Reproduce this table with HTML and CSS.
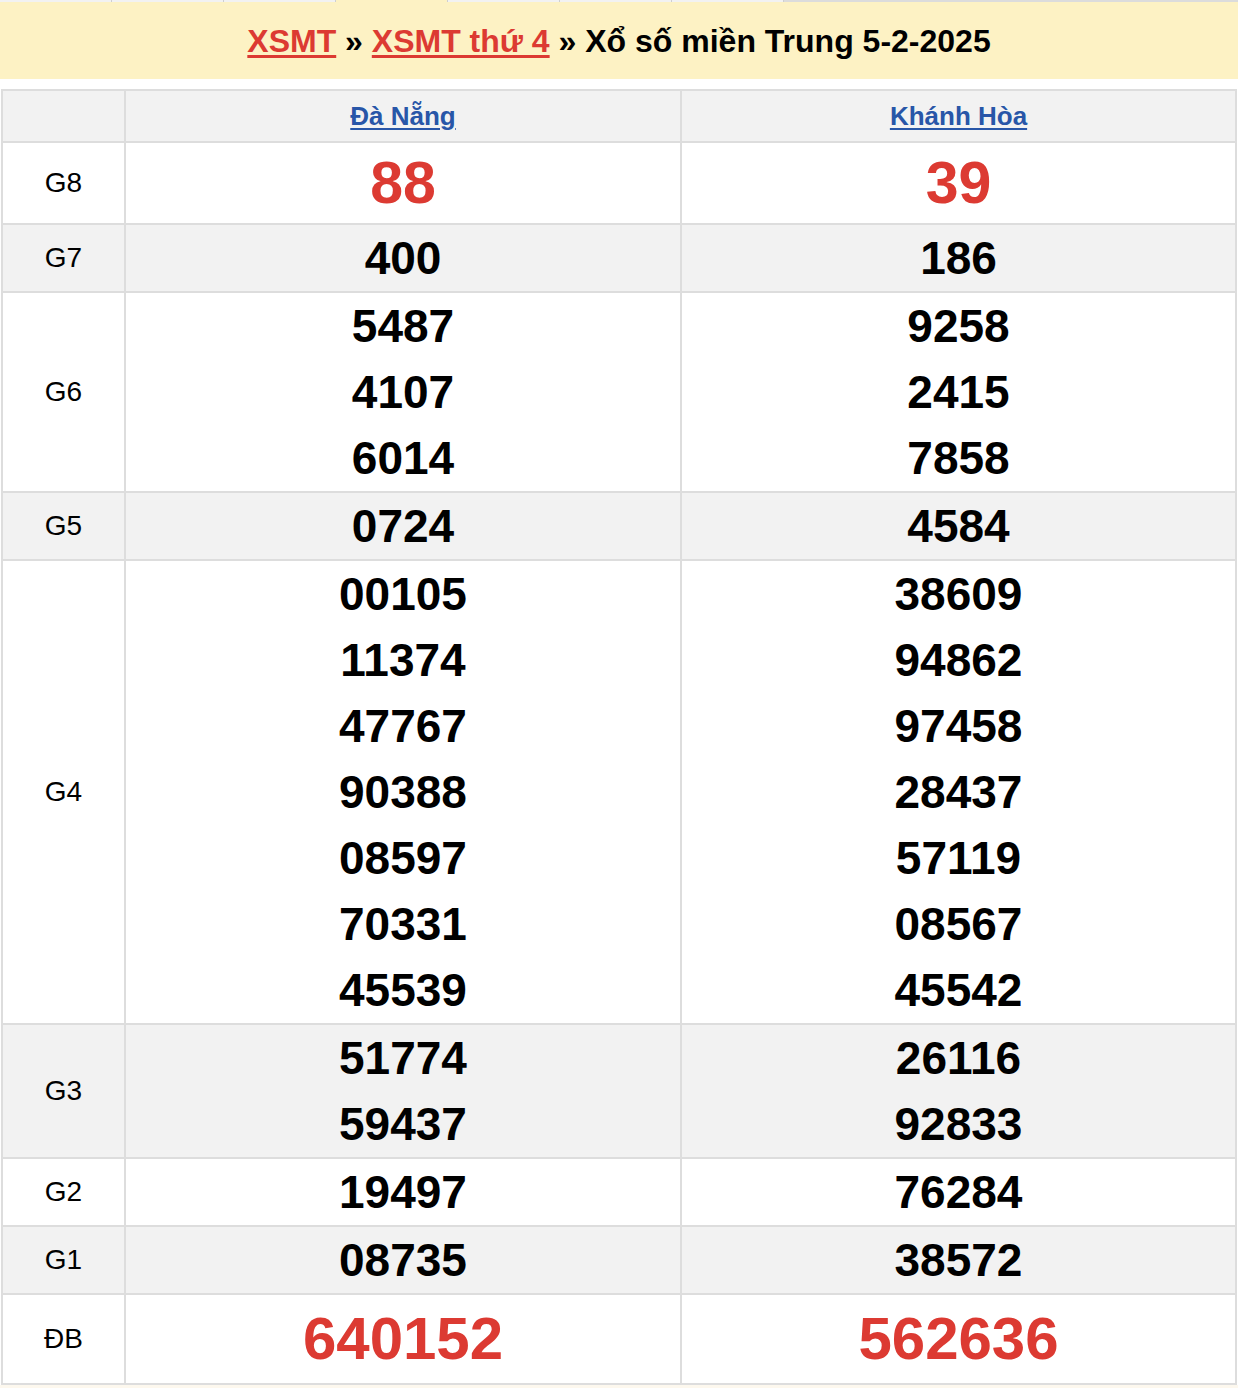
FILE: index.html
```html
<!DOCTYPE html>
<html lang="vi">
<head>
<meta charset="utf-8">
<title>Xổ số miền Trung 5-2-2025</title>
<link rel="stylesheet" href="styles.css">
</head>
<body>
<div class="tabs">
  <span class="tab"></span><span class="tab"></span><span class="tab"></span><span class="tab tab-active"></span><span class="tab"></span><span class="tab"></span><span class="tab"></span><span class="tab-rest"></span>
</div>
<div class="title-bar">
  <h1 class="title"><a href="#" class="crumb">XSMT</a> » <a href="#" class="crumb">XSMT thứ 4</a> » Xổ số miền Trung 5-2-2025</h1>
</div>
<table class="results">
  <colgroup><col class="c-label"><col class="c-prov"><col class="c-prov2"></colgroup>
  <thead>
    <tr class="alt head">
      <th></th>
      <th><a href="#" class="prov">Đà Nẵng</a></th>
      <th><a href="#" class="prov">Khánh Hòa</a></th>
    </tr>
  </thead>
  <tbody>
    <tr class="big-row">
      <td class="label">G8</td>
      <td><div class="num red big">88</div></td>
      <td><div class="num red big">39</div></td>
    </tr>
    <tr class="alt">
      <td class="label">G7</td>
      <td><div class="num">400</div></td>
      <td><div class="num">186</div></td>
    </tr>
    <tr>
      <td class="label">G6</td>
      <td><div class="num">5487</div><div class="num">4107</div><div class="num">6014</div></td>
      <td><div class="num">9258</div><div class="num">2415</div><div class="num">7858</div></td>
    </tr>
    <tr class="alt">
      <td class="label">G5</td>
      <td><div class="num">0724</div></td>
      <td><div class="num">4584</div></td>
    </tr>
    <tr>
      <td class="label">G4</td>
      <td><div class="num">00105</div><div class="num">11374</div><div class="num">47767</div><div class="num">90388</div><div class="num">08597</div><div class="num">70331</div><div class="num">45539</div></td>
      <td><div class="num">38609</div><div class="num">94862</div><div class="num">97458</div><div class="num">28437</div><div class="num">57119</div><div class="num">08567</div><div class="num">45542</div></td>
    </tr>
    <tr class="alt">
      <td class="label">G3</td>
      <td><div class="num">51774</div><div class="num">59437</div></td>
      <td><div class="num">26116</div><div class="num">92833</div></td>
    </tr>
    <tr>
      <td class="label">G2</td>
      <td><div class="num">19497</div></td>
      <td><div class="num">76284</div></td>
    </tr>
    <tr class="alt">
      <td class="label">G1</td>
      <td><div class="num">08735</div></td>
      <td><div class="num">38572</div></td>
    </tr>
    <tr>
      <td class="label">ĐB</td>
      <td><div class="num red db">640152</div></td>
      <td><div class="num red db">562636</div></td>
    </tr>
  </tbody>
</table>
<div class="foot"></div>
</body>
</html>
```

FILE: styles.css
```css
html, body {
  margin: 0;
  padding: 0;
  background: #ffffff;
  font-family: "Liberation Sans", Arial, Helvetica, sans-serif;
  color: #000;
}

.tabs {
  display: flex;
  height: 2px;
  background: #f2f2f2;
}
.tab {
  width: 111px;
  border-right: 1px solid #cfcfcf;
  background: #f2f2f2;
}
.tab-active {
  background: #fdf2c4;
}
.tab-rest {
  flex: 1;
  background: #dcdcdc;
}

.title-bar {
  height: 77px;
  background: #fdf2c4;
  display: flex;
  align-items: center;
  justify-content: center;
}
.title {
  margin: 0;
  font-size: 32px;
  font-weight: bold;
  line-height: 1;
  color: #000;
}
.crumb {
  color: #dc3a32;
  text-decoration: underline;
  text-decoration-thickness: 3px;
  text-underline-offset: 3px;
}

.results {
  margin: 10px 0 0 1px;
  width: 1236px;
  table-layout: fixed;
  border-collapse: collapse;
  border: 2px solid #dddddd;
}
.c-label { width: 123px; }
.c-prov { width: 556px; }
.c-prov2 { width: 555px; }

.results th,
.results td {
  border: 2px solid #dddddd;
  padding: 0;
  text-align: center;
  vertical-align: middle;
}
.results tr.alt {
  background: #f2f2f2;
}
.head th {
  height: 50px;
}
.prov {
  color: #2856a8;
  font-size: 26px;
  font-weight: bold;
  text-decoration: underline;
  text-decoration-thickness: 2px;
  text-underline-offset: 3px;
}

.label {
  font-size: 28px;
  font-weight: normal;
}

.num {
  font-size: 46px;
  font-weight: bold;
  line-height: 66px;
  height: 66px;
}
.num.big {
  font-size: 59px;
  line-height: 80px;
  height: 80px;
}
.num.db {
  font-size: 60px;
  line-height: 88px;
  height: 88px;
}
.red {
  color: #dc3a32;
}

.foot {
  height: 3px;
  background: #fdf8ee;
}
```
